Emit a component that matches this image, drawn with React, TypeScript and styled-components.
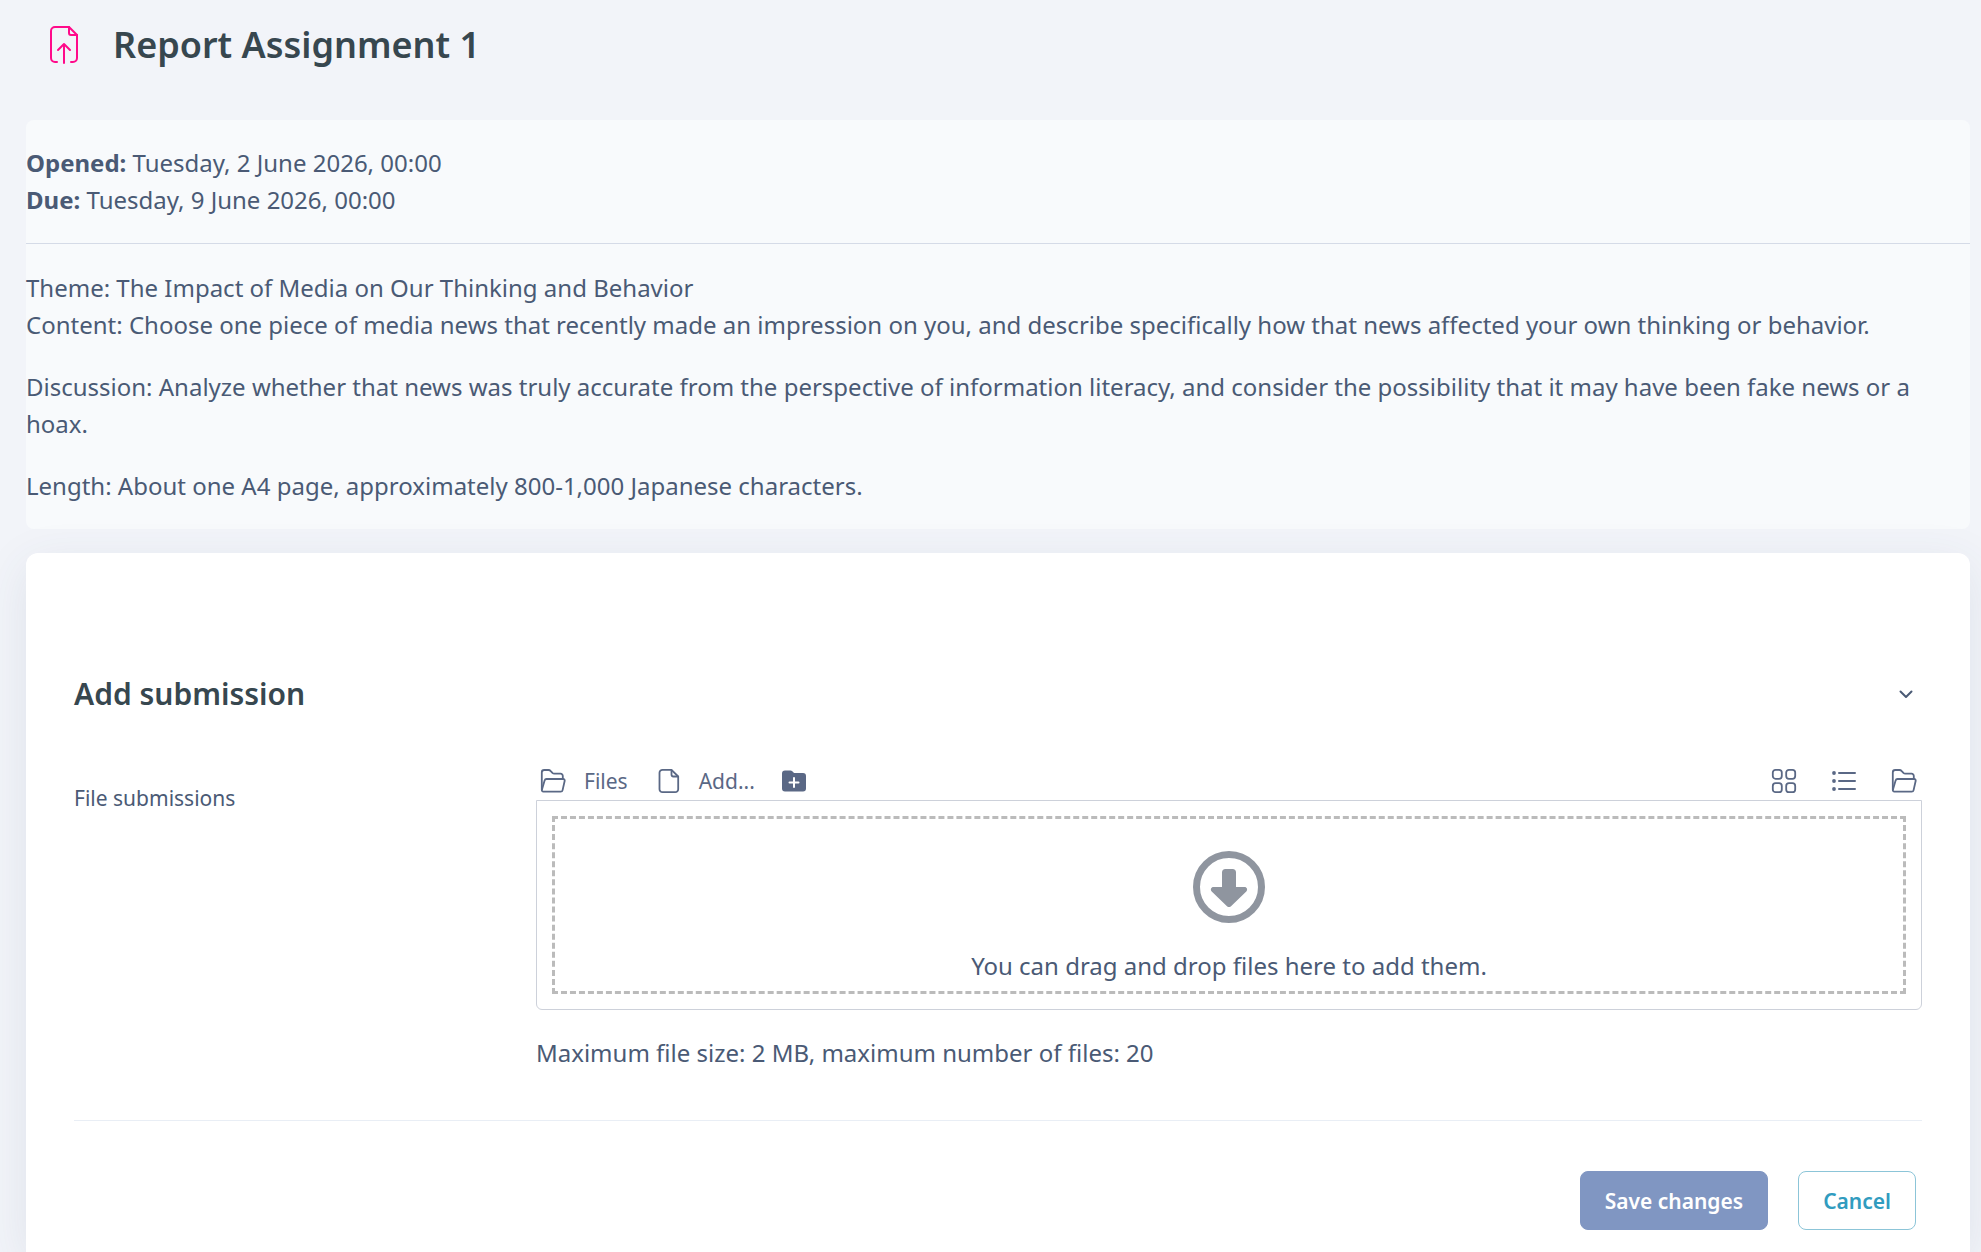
import React, { useState } from 'react';
import styled, { createGlobalStyle } from 'styled-components';

const GlobalStyle = createGlobalStyle`
  *, *::before, *::after { box-sizing: border-box; }
  body {
    margin: 0;
    background: #f2f4f9;
    color: #4a5a75;
    font-family: "Noto Sans", sans-serif;
    font-size: 24px;
    line-height: 37px;
  }
  button { font-family: inherit; cursor: pointer; }
  svg { display: block; flex: none; }
`;

const Page = styled.main`
  display: flex;
  flex-direction: column;
  min-height: 100vh;
  padding: 0 11px 0 26px;
`;

const Header = styled.header`
  display: flex;
  align-items: center;
  gap: 35px;
  height: 90px;
  margin-bottom: 30px;
  padding-left: 24px;
`;

const Title = styled.h1`
  margin: 0;
  color: #37474f;
  font-size: 36px;
  line-height: 44px;
  font-weight: 600;
`;

const Intro = styled.section`
  margin-bottom: 24px;
  border-radius: 8px;
  background: #f8fafc;
`;

const Dates = styled.div`
  padding: 24px 0 25px;
  border-bottom: 1px solid #d5dbe7;
`;

const Description = styled.div`
  display: flex;
  flex-direction: column;
  gap: 25px;
  padding: 25px 0;
`;

const Text = styled.p`
  margin: 0;
`;

const Card = styled.form`
  flex: 1;
  padding: 117px 48px 22px;
  border-radius: 12px 12px 0 0;
  background: #ffffff;
  box-shadow: 0 12px 48px rgba(60, 80, 110, 0.1);
`;

const SectionHead = styled.div`
  display: flex;
  align-items: center;
  justify-content: space-between;
  height: 48px;
  margin-bottom: 45px;
`;

const SectionTitle = styled.h2`
  margin: 0;
  color: #37474f;
  font-size: 30px;
  line-height: 40px;
  font-weight: 600;
`;

const IconButton = styled.button`
  display: flex;
  align-items: center;
  gap: 18px;
  padding: 4px;
  border: 0;
  background: none;
  color: #5a6885;
  font-size: 21px;
  line-height: 32px;
`;

const Field = styled.div`
  display: grid;
  grid-template-columns: 1fr 3fr;
`;

const FieldLabel = styled.div`
  padding-top: 19px;
  font-size: 21px;
  line-height: 32px;
`;

const FieldBody = styled.div`
  min-width: 0;
`;

const Toolbar = styled.div`
  display: flex;
  align-items: center;
  justify-content: space-between;
  height: 35px;
  margin-bottom: 2px;
  padding-right: 1px;
`;

const ToolGroup = styled.div<{ $gap: number }>`
  display: flex;
  align-items: center;
  gap: ${({ $gap }) => $gap}px;
`;

const FileArea = styled.div`
  padding: 15px;
  border: 1px solid #cdd1da;
  border-radius: 0 0 6px 6px;
`;

const DropZone = styled.div`
  display: flex;
  flex-direction: column;
  align-items: center;
  gap: 24px;
  padding: 32px 0 7px;
  border: 3px dashed #bbbbbb;
`;

const Limits = styled.p`
  margin: 24px 0 49px;
`;

const Actions = styled.div`
  display: flex;
  justify-content: flex-end;
  gap: 30px;
  padding: 50px 6px 0 0;
  border-top: 1px solid #e9eef5;
`;

const ActionButton = styled.button<{ $primary?: boolean }>`
  height: 59px;
  padding: 0 24px;
  border: 1px solid ${({ $primary }) => ($primary ? '#8096c2' : '#8cc5d8')};
  border-radius: 8px;
  background: ${({ $primary }) => ($primary ? '#8096c2' : '#ffffff')};
  color: ${({ $primary }) => ($primary ? '#ffffff' : '#319cbf')};
  font-size: 21px;
  line-height: 32px;
  font-weight: 600;
`;

const AssignmentIcon = () => (
  <svg width="28" height="38" viewBox="0 0 28 38" fill="none" stroke="#ff0a8a" strokeWidth="2" strokeLinecap="round" strokeLinejoin="round">
    <path d="M7 36H5a4 4 0 0 1-4-4V5a4 4 0 0 1 4-4h14l8 8v23a4 4 0 0 1-4 4h-2" />
    <path d="M19 1v6a2 2 0 0 0 2 2h6" />
    <path d="M14 37V18M8 24l6-6 6 6" />
  </svg>
);

const FolderOpenIcon = () => (
  <svg width="26" height="26" viewBox="0 0 26 26" fill="none" stroke="currentColor" strokeWidth="1.8" strokeLinejoin="round">
    <path d="M1.800 22V4.400a2.400 2.400 0 0 1 2.400-2.400h4.300c.8 0 1.500.3 2 .9l1.900 2c.5.500 1.200.8 2 .8h6.200a2.200 2.200 0 0 1 2.200 2.200v3.100" />
    <path d="M6.500 11h16.700c1 0 1.700.9 1.500 1.800l-2.100 9.300a2 2 0 0 1-2 1.600H3.400c-1.100 0-1.800-1-1.500-2L4.600 12.400A2 2 0 0 1 6.500 11Z" />
  </svg>
);

const FileIcon = () => (
  <svg width="26" height="26" viewBox="-3 0 26 26" fill="none" stroke="currentColor" strokeWidth="1.8" strokeLinejoin="round">
    <path d="M4.500 1.800h9l6.700 6.700v12.700a3 3 0 0 1-3 3H4.500a3 3 0 0 1-3-3V4.800a3 3 0 0 1 3-3Z" />
    <path d="M13.500 1.800v5a1.700 1.700 0 0 0 1.700 1.700h5" />
  </svg>
);

const FolderPlusIcon = () => (
  <svg width="24" height="26" viewBox="1 0 24 26">
    <path fill="currentColor" d="M4 2.500h5.500c.7 0 1.300.3 1.800.8l1.200 1.200c.4.400.9.600 1.500.6h8a3 3 0 0 1 3 3v12.400a3 3 0 0 1-3 3H4a3 3 0 0 1-3-3V5.500a3 3 0 0 1 3-3Z" />
    <path d="M13 10v9M8.500 14.500h9" stroke="#ffffff" strokeWidth="2" strokeLinecap="round" />
  </svg>
);

const GridIcon = () => (
  <svg width="26" height="26" viewBox="0 0 26 26" fill="none" stroke="currentColor" strokeWidth="1.8">
    <rect x="1.800" y="1.800" width="9" height="9" rx="2.800" />
    <rect x="15.200" y="1.800" width="9" height="9" rx="2.800" />
    <rect x="1.800" y="15.200" width="9" height="9" rx="2.800" />
    <rect x="15.200" y="15.200" width="9" height="9" rx="2.800" />
  </svg>
);

const ListIcon = () => (
  <svg width="26" height="26" viewBox="0 0 26 26" stroke="currentColor" strokeWidth="2" strokeLinecap="round">
    <path d="M8 5h16M8 13h16M8 21h16" />
    <g fill="currentColor" stroke="none">
      <circle cx="3" cy="5" r="1.900" />
      <circle cx="3" cy="13" r="1.900" />
      <circle cx="3" cy="21" r="1.900" />
    </g>
  </svg>
);

const ChevronIcon = () => (
  <svg width="24" height="24" viewBox="0 0 24 24" fill="none" stroke="#4a5a75" strokeWidth="2" strokeLinecap="round" strokeLinejoin="round">
    <path d="M6.500 9.500 12 15l5.500-5.500" />
  </svg>
);

const DropIcon = () => (
  <svg width="72" height="72" viewBox="0 0 72 72">
    <circle cx="36" cy="36" r="32.500" fill="none" stroke="#8f959f" strokeWidth="7" />
    <path fill="#8f959f" d="M32.500 18h7a3.500 3.500 0 0 1 3.500 3.500V36h8.500c2.400 0 3.500 2.800 1.800 4.400L38 55.200a3 3 0 0 1-4 0L18.700 40.400C17 38.800 18.100 36 20.500 36H29V21.500a3.500 3.500 0 0 1 3.500-3.500Z" />
  </svg>
);

export default function App() {
  const [open, setOpen] = useState(true);

  return (
    <>
      <GlobalStyle />
      <Page>
        <Header>
          <AssignmentIcon />
          <Title>Report Assignment 1</Title>
        </Header>

        <Intro>
          <Dates>
            <Text><strong>Opened:</strong> Tuesday, 2 June 2026, 00:00</Text>
            <Text><strong>Due:</strong> Tuesday, 9 June 2026, 00:00</Text>
          </Dates>
          <Description>
            <Text>
              Theme: The Impact of Media on Our Thinking and Behavior
              <br />
              Content: Choose one piece of media news that recently made an impression on you, and describe specifically how that news affected your own thinking or behavior.
            </Text>
            <Text>
              Discussion: Analyze whether that news was truly accurate from the perspective of information literacy, and consider the possibility that it may have been fake news or a hoax.
            </Text>
            <Text>Length: About one A4 page, approximately 800-1,000 Japanese characters.</Text>
          </Description>
        </Intro>

        <Card onSubmit={(event) => event.preventDefault()}>
          <SectionHead>
            <SectionTitle>Add submission</SectionTitle>
            <IconButton type="button" aria-label="Toggle section" aria-expanded={open} onClick={() => setOpen(!open)}>
              <ChevronIcon />
            </IconButton>
          </SectionHead>

          {open && (
            <Field role="group" aria-labelledby="file-submissions">
              <FieldLabel id="file-submissions">File submissions</FieldLabel>
              <FieldBody>
                <Toolbar>
                  <ToolGroup $gap={19}>
                    <IconButton type="button"><FolderOpenIcon />Files</IconButton>
                    <IconButton type="button"><FileIcon />Add...</IconButton>
                    <IconButton type="button" aria-label="Create folder"><FolderPlusIcon /></IconButton>
                  </ToolGroup>
                  <ToolGroup $gap={26}>
                    <IconButton type="button" aria-label="Icon view"><GridIcon /></IconButton>
                    <IconButton type="button" aria-label="List view"><ListIcon /></IconButton>
                    <IconButton type="button" aria-label="Tree view"><FolderOpenIcon /></IconButton>
                  </ToolGroup>
                </Toolbar>
                <FileArea>
                  <DropZone>
                    <DropIcon />
                    <Text>You can drag and drop files here to add them.</Text>
                  </DropZone>
                </FileArea>
                <Limits>Maximum file size: 2 MB, maximum number of files: 20</Limits>
              </FieldBody>
            </Field>
          )}

          <Actions>
            <ActionButton type="submit" $primary>Save changes</ActionButton>
            <ActionButton type="button">Cancel</ActionButton>
          </Actions>
        </Card>
      </Page>
    </>
  );
}
